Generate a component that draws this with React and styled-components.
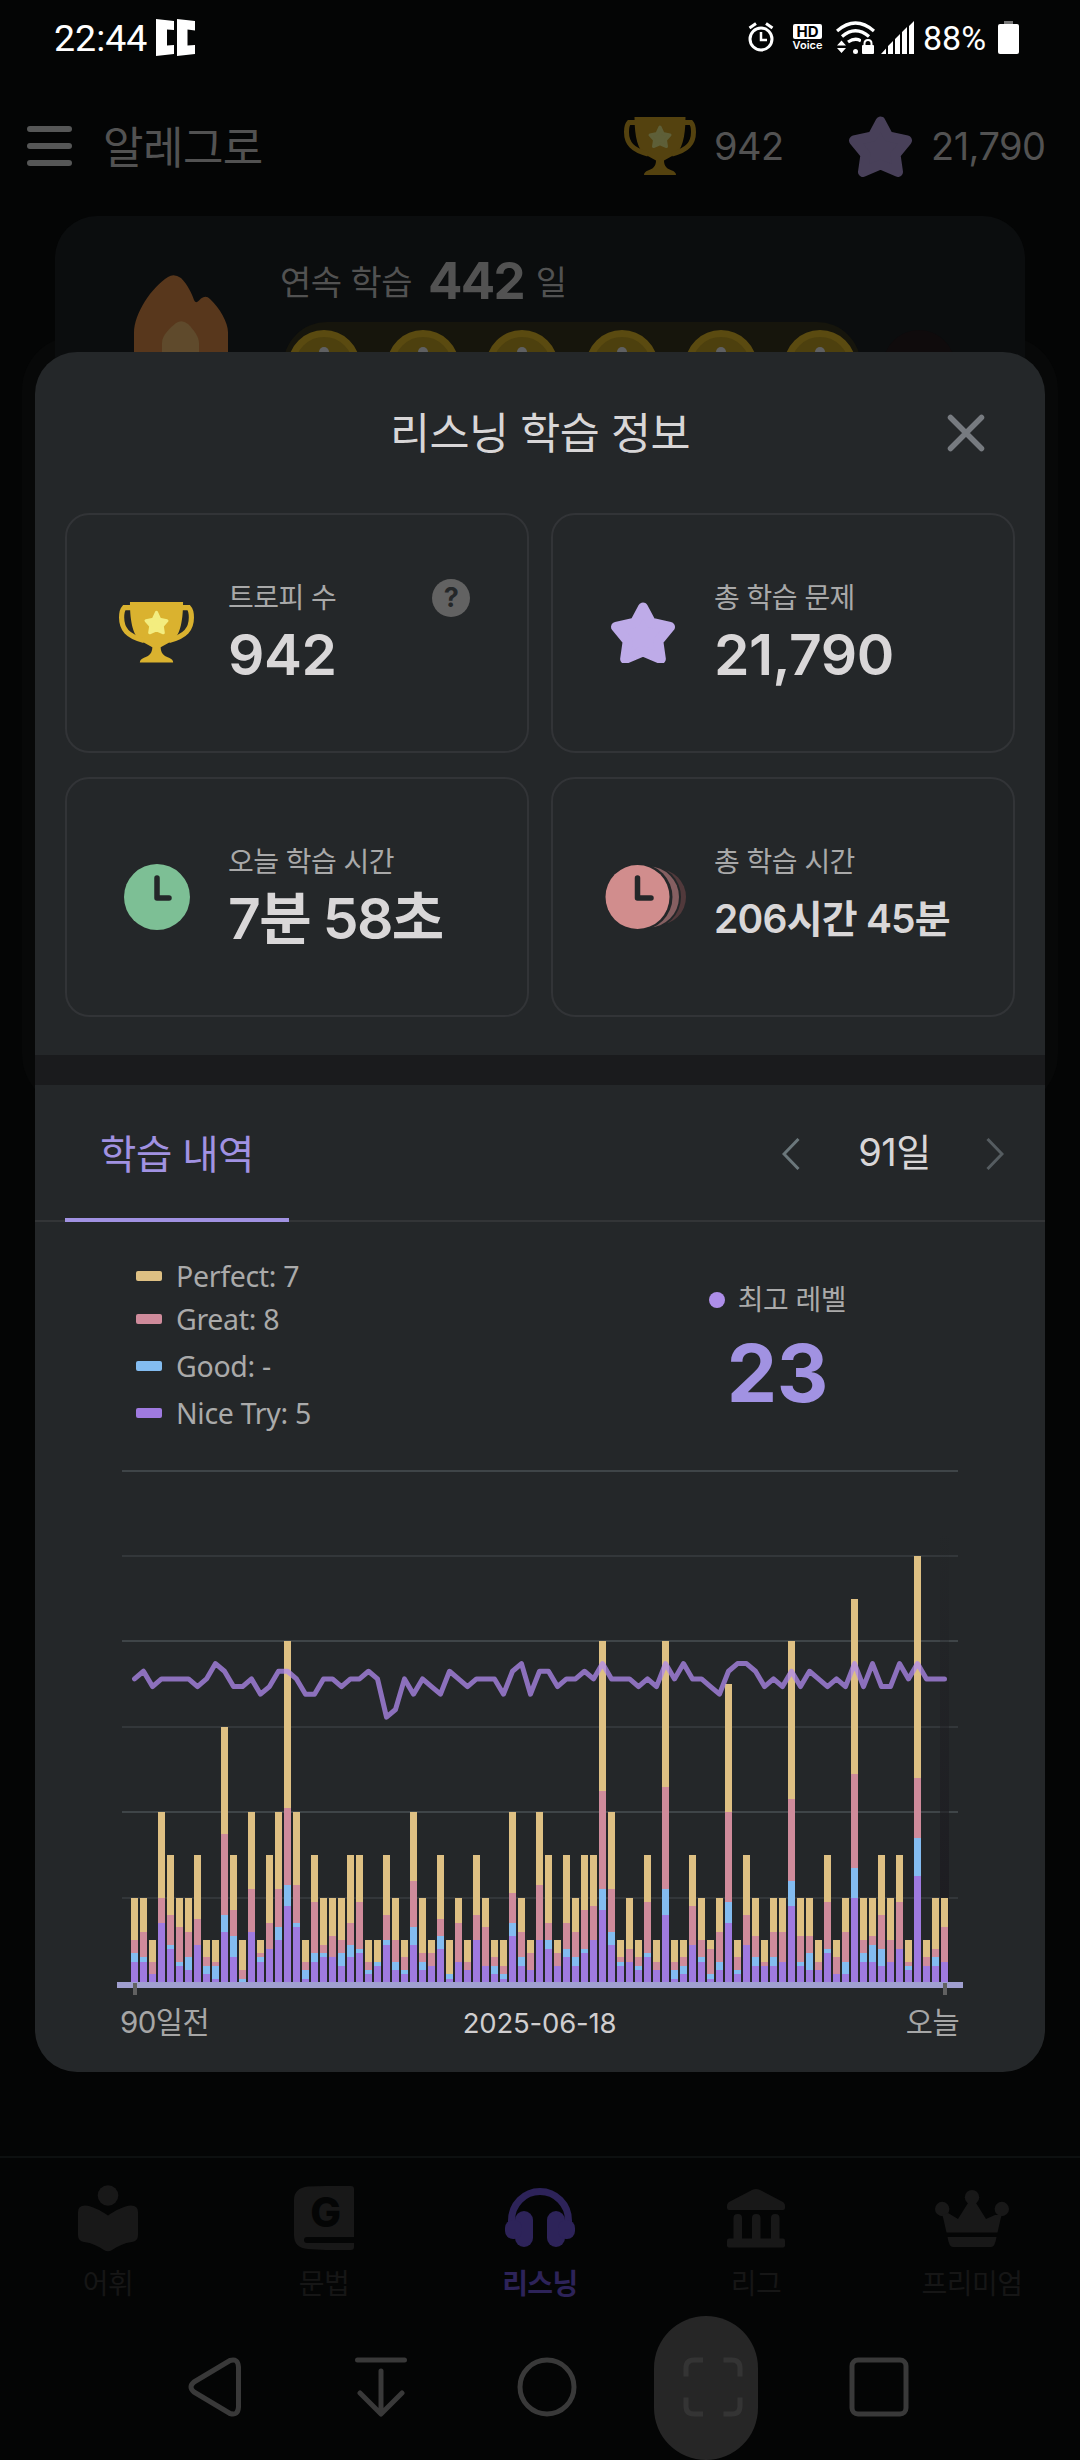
import React from 'react';
import styled, { createGlobalStyle } from 'styled-components';

// [nice try, good, great, total] - running sums for every day
const days = [
  [5, 7, 10, 20], [5, 6, 12, 20], [2, 2, 5, 10], [14, 14, 20, 40], [8, 9, 16, 30], [4, 5, 13, 20], [3, 6, 12, 20],
  [9, 9, 15, 30], [2, 4, 6, 10], [1, 4, 5, 10], [12, 16, 35, 60], [6, 11, 17, 30], [0, 1, 3, 10], [12, 12, 22, 40],
  [5, 6, 7, 10], [8, 8, 14, 30], [10, 13, 22, 40], [18, 23, 41, 80], [13, 14, 23, 40], [1, 3, 5, 10], [5, 7, 19, 30],
  [6, 7, 9, 20], [6, 6, 11, 20], [4, 7, 10, 20], [6, 9, 14, 30], [7, 8, 19, 30], [2, 3, 5, 10], [4, 5, 5, 10],
  [9, 10, 16, 30], [3, 5, 10, 20], [2, 3, 6, 10], [9, 13, 24, 40], [3, 5, 7, 20], [4, 4, 7, 10], [8, 11, 15, 30],
  [1, 2, 2, 10], [5, 5, 14, 20], [3, 3, 5, 10], [10, 10, 16, 30], [4, 4, 13, 20], [2, 4, 6, 10], [1, 2, 4, 10],
  [11, 14, 21, 40], [4, 6, 12, 20], [3, 3, 7, 10], [10, 10, 23, 40], [8, 10, 14, 30], [4, 4, 7, 10], [6, 8, 14, 30],
  [4, 6, 12, 20], [7, 8, 17, 30], [10, 10, 18, 30], [17, 22, 45, 80], [9, 12, 22, 40], [4, 5, 6, 10], [5, 5, 8, 20],
  [3, 4, 6, 10], [6, 7, 19, 30], [3, 3, 5, 10], [16, 22, 46, 80], [1, 3, 5, 10], [2, 4, 6, 10], [9, 9, 18, 30],
  [5, 6, 10, 20], [1, 2, 8, 10], [3, 5, 12, 20], [14, 19, 40, 70], [2, 3, 6, 10], [9, 9, 16, 30], [4, 6, 11, 20],
  [4, 4, 5, 10], [4, 6, 12, 20], [5, 5, 12, 20], [18, 24, 43, 80], [4, 5, 11, 20], [3, 7, 11, 20], [3, 3, 5, 10],
  [7, 8, 19, 30], [2, 2, 6, 10], [2, 5, 12, 20], [20, 27, 49, 90], [5, 7, 10, 20], [5, 9, 11, 20], [4, 8, 16, 30],
  [5, 5, 10, 20], [8, 8, 19, 30], [3, 4, 5, 10], [25, 34, 48, 100], [4, 4, 6, 10], [4, 6, 8, 20], [5, 5, 13, 20]
];

const levels = [
  23, 24, 22, 23, 23, 23, 23, 22, 23, 25, 24, 22, 22, 23, 21, 22, 24, 24, 23, 21, 21, 23, 23, 22, 23, 23, 24, 23, 18, 19,
  23, 21, 23, 22, 21, 24, 23, 22, 23, 23, 23, 21, 24, 25, 21, 24, 24, 22, 23, 23, 24, 23, 25, 23, 23, 23, 22, 23, 22, 25,
  23, 25, 23, 23, 22, 21, 24, 25, 25, 24, 22, 23, 22, 24, 22, 24, 23, 22, 23, 22, 25, 22, 25, 22, 22, 25, 23, 25, 23, 23,
  23
];

const barColors = ['#9f7ae0', '#83bcf0', '#cf8b9b', '#dec083'];

const legend = [
  { label: 'Perfect: 7', color: '#dec083' },
  { label: 'Great: 8', color: '#cf8b9b' },
  { label: 'Good: -', color: '#83bcf0' },
  { label: 'Nice Try: 5', color: '#9f7ae0' }
];

const BASE = 514;
const UNIT = 4.27;

function StudyChart() {
  const toY = (value) => Math.round(BASE - value * UNIT);
  const points = levels.map((level, i) => `${17.5 + i * 9},${209.9 + (23 - level) * 7.65}`).join(' ');
  return (
    <svg width="846" height="526" viewBox="0 0 846 526">
      <defs>
        <linearGradient id="today" x1="0" y1="0" x2="0" y2="1">
          <stop offset="0" stopColor="#1c1b20" stopOpacity="0" />
          <stop offset="1" stopColor="#1c1b20" />
        </linearGradient>
      </defs>
      {[20, 40, 60, 80, 100, 120].map((v) => (
        <rect key={v} x="5" y={toY(v) - 1} width="836" height="2" fill={v % 40 === 0 ? '#3f4548' : '#33373a'} />
      ))}
      <rect x="823" y="60" width="9" height="454" fill="url(#today)" />
      {days.map((day, i) =>
        day.map((value, part) => {
          const from = part ? day[part - 1] : 0;
          if (value === from) return null;
          return (
            <rect
              key={`${i}-${part}`}
              x={14 + i * 9}
              y={toY(value)}
              width="7"
              height={toY(from) - toY(value)}
              fill={barColors[part]}
            />
          );
        })
      )}
      <polyline
        points={points}
        fill="none"
        stroke="#af8aed"
        strokeOpacity="0.75"
        strokeWidth="5"
        strokeLinejoin="round"
        strokeLinecap="round"
      />
      <rect x="0" y="513" width="846" height="6" fill="#a09fd0" />
      <rect x="16" y="514" width="4" height="12" fill="#616161" />
      <rect x="826" y="514" width="4" height="12" fill="#616161" />
    </svg>
  );
}

function StarIcon({ size = 63, color }) {
  return (
    <svg width={size} height={(size * 61) / 63} viewBox="0 0 63 61">
      <path
        d="M31.5 5.5L39.5 20.5L58 24.5L46.5 38.5L49 56L31.5 48.5L14 56L16.5 38.5L5 24.5L23.5 20.5Z"
        fill={color}
        stroke={color}
        strokeWidth="10"
        strokeLinejoin="round"
      />
    </svg>
  );
}

function TrophyIcon({ width = 72, color, star }) {
  return (
    <svg width={width} height={(width * 58) / 72} viewBox="0 0 72 58">
      <path
        d="M10.5 0H61.5C61.5 20 58 34 50 38L40 43.5C40 49 43 52 48 53.5Q52 55 52 58H20Q20 55 24 53.5C29 52 32 49 32 43.5L22 38C14 34 10.5 20 10.5 0Z"
        fill={color}
      />
      <path
        d="M12 5.5H5Q2.5 8 2.5 15C2.5 26 8 33 24 37M60 5.5H67Q69.5 8 69.5 15C69.5 26 64 33 48 37"
        fill="none"
        stroke={color}
        strokeWidth="5"
      />
      <path
        d="M36 10L39 16.5L46 18L41.5 23L42.5 29.5L36 26.8L29.5 29.5L30.5 23L26 18L33 16.5Z"
        fill={star}
        stroke={star}
        strokeWidth="3"
        strokeLinejoin="round"
      />
    </svg>
  );
}

function ClockIcon({ color }) {
  return (
    <svg width="66" height="66" viewBox="0 0 66 66">
      <circle cx="33" cy="33" r="33" fill={color} />
      <path d="M33 14V34H45" fill="none" stroke="#242729" strokeWidth="5.5" strokeLinecap="round" strokeLinejoin="round" />
    </svg>
  );
}

function StackedClockIcon() {
  return (
    <svg width="82" height="66" viewBox="0 0 82 66">
      <circle cx="53" cy="33" r="28" fill="#51393b" />
      <circle cx="44" cy="33" r="32" fill="#242729" />
      <circle cx="43.5" cy="33" r="30.5" fill="#855f61" />
      <circle cx="34" cy="33" r="33.5" fill="#242729" />
      <circle cx="32.5" cy="33" r="32" fill="#d18d8d" />
      <path d="M32.5 14V34H46" fill="none" stroke="#242729" strokeWidth="5.5" strokeLinecap="round" strokeLinejoin="round" />
    </svg>
  );
}

function StatusIcons() {
  return (
    <>
      <svg width="26" height="30" viewBox="0 0 26 30" fill="none" stroke="#fff">
        <circle cx="13" cy="17" r="11" strokeWidth="3" />
        <path d="M13 10V18H19" strokeWidth="2.5" />
        <path d="M1.5 6L8 1.5M24.5 6L18 1.5" strokeWidth="3" />
      </svg>
      <HdVoice>
        <b>HD</b>
        <span>Voice</span>
      </HdVoice>
      <svg width="39" height="33" viewBox="0 0 39 33">
        <g fill="none" stroke="#fff" strokeWidth="3.3">
          <path d="M1 10Q19.5 -6 38 10" />
          <path d="M6 15.5Q19.5 4 33 15.5" />
          <path d="M12 21Q19.5 16 25 20" />
        </g>
        <path d="M1 24.5L5.5 19.5L10 24.5ZM1 27L5.5 32L10 27Z" fill="#fff" />
        <circle cx="19.5" cy="30.5" r="2.5" fill="#fff" />
        <rect x="25" y="17" width="14" height="16" fill="#040404" />
        <rect x="26" y="24" width="12" height="9" rx="1" fill="#fff" />
        <path d="M28.5 25V22.5Q28.5 19 32 19T35.5 22.5V25" fill="none" stroke="#fff" strokeWidth="2" />
      </svg>
      <svg width="33" height="33" viewBox="0 0 33 33" fill="#fff">
        <path d="M0 33L5 27.5V33ZM7 33V25L12 20V33ZM14 33V18L19 13V33ZM21 33V11L26 6V33ZM28 33V5L33 0V33Z" />
      </svg>
      <Percent>88%</Percent>
      <svg width="21" height="33" viewBox="0 0 21 33">
        <rect x="6" y="0" width="9" height="4" fill="#777" />
        <rect x="0" y="3" width="21" height="30" rx="2" fill="#fff" />
      </svg>
    </>
  );
}

function WordIcon() {
  return (
    <svg width="60" height="67" viewBox="0 0 60 67" fill="#181818">
      <circle cx="30" cy="10.5" r="10.3" />
      <path d="M30 30.5C22 25 14 21 7 20.5Q0 20.5 0 27V50Q0 56 6 57C14 58 20 61 26 65Q30 67.5 34 65C40 61 46 58 54 57Q60 56 60 50V27Q60 20.5 53 20.5C46 21 38 25 30 30.5Z" />
    </svg>
  );
}

function GrammarIcon() {
  return (
    <svg width="60" height="64" viewBox="0 0 60 64">
      <path
        d="M14 0.5L32 0H57Q60 0 60 3V51H13A3 3 0 0 0 13 57H60V61Q60 64 57 64H32L14 63Q0 62 0 49V14Q0 2 14 0.5Z"
        fill="#181818"
      />
      <BookLetter x="31.5" y="41" textAnchor="middle">
        G
      </BookLetter>
    </svg>
  );
}

function ListeningIcon() {
  return (
    <svg width="70" height="60" viewBox="0 0 70 60" fill="#2d2359">
      <path d="M6.5 38V32.5A28.5 29 0 0 1 63.5 32.5V38" fill="none" stroke="#2d2359" strokeWidth="7" />
      <rect x="10" y="23" width="18" height="36" rx="9" />
      <rect x="42" y="23" width="18" height="36" rx="9" />
      <rect x="0" y="32" width="17" height="19" rx="8" />
      <rect x="53" y="32" width="17" height="19" rx="8" />
    </svg>
  );
}

function LeagueIcon() {
  return (
    <svg width="58" height="59" viewBox="0 0 58 59" fill="#181818">
      <path d="M0 17Q0 14 3 12.5L25 1Q29 -0.8 33 1L55 12.5Q58 14 58 17V19Q58 21 56 21H2Q0 21 0 19Z" />
      <rect x="6.5" y="25" width="8.5" height="30" rx="4" />
      <rect x="25" y="25" width="8.5" height="30" rx="4" />
      <rect x="44" y="25" width="8.5" height="30" rx="4" />
      <rect x="0" y="49.5" width="58" height="9" rx="2" />
    </svg>
  );
}

function PremiumIcon() {
  return (
    <svg width="74" height="57" viewBox="0 0 74 57" fill="#181818">
      <circle cx="7.2" cy="19" r="7.2" />
      <circle cx="37" cy="7.2" r="7.2" />
      <circle cx="66.8" cy="19" r="7.2" />
      <path d="M7.5 25L11.5 42.5H62.5L66.5 25L60 25L51 29L41 13H33L23 29L13 23Z" />
      <path d="M12.5 47H61.5Q60 57 56 57H18Q14 57 12.5 47Z" />
    </svg>
  );
}

const tabs = [
  { label: '어휘', Icon: WordIcon },
  { label: '문법', Icon: GrammarIcon },
  { label: '리스닝', Icon: ListeningIcon, active: true },
  { label: '리그', Icon: LeagueIcon },
  { label: '프리미엄', Icon: PremiumIcon }
];

function App() {
  return (
    <Screen>
      <GlobalStyle />
      <StatusBar>
        <Clock>22:44</Clock>
        <svg width="39" height="37" viewBox="0 0 39 37" fill="#fff">
          <path d="M0 0L18 2V11L11 10.5V26.5L18 26V35L0 37ZM21 0L39 2V11.5L31.5 10.5V26.5L39 26V35L21 37Z" />
        </svg>
        <StatusRight>
          <StatusIcons />
        </StatusRight>
      </StatusBar>
      <Header>
        <MenuButton>
          <i />
          <i />
          <i />
        </MenuButton>
        <PageName>알레그로</PageName>
        <TrophyIcon color="#54420f" star="#5e5f38" />
        <HeaderCount $left={18} $width={135}>
          942
        </HeaderCount>
        <StarIcon color="#484059" />
        <HeaderCount $left={19}>21,790</HeaderCount>
      </Header>
      <StreakCard>
        <svg width="94" height="90" viewBox="0 0 94 90">
          <path
            d="M0 90V58C0 38 18 12 34 2Q40 -2 47 3C54 10 58 19 60 25Q61.5 29 65 25.5L67 23.5Q72 20 76 24C86 33 94 48 94 57V90Z"
            fill="#58371c"
          />
          <path d="M28 90V68C28 60 36 53 42 48Q48 44 54 49C60 55 65 62 65 68V90Z" fill="#5f4a2c" />
        </svg>
        <StreakBody>
          <StreakText>
            <span>연속 학습</span>
            <strong>442</strong>
            <span>일</span>
          </StreakText>
          <CoinRow>
            <CoinTrack>
              {[0, 1, 2, 3, 4, 5].map((n) => (
                <Coin key={n} />
              ))}
            </CoinTrack>
            <EmptyCoin />
          </CoinRow>
        </StreakBody>
      </StreakCard>
      <BackPanel />

      <Modal>
        <ModalHeader>
          <ModalTitle>리스닝 학습 정보</ModalTitle>
          <CloseButton>
            <svg width="38" height="38" viewBox="0 0 38 38" stroke="#777b80" strokeWidth="5.5" strokeLinecap="round">
              <path d="M3.5 3.5L34.5 34.5M34.5 3.5L3.5 34.5" />
            </svg>
          </CloseButton>
        </ModalHeader>
        <StatGrid>
          <StatCard>
            <StatIcon $shift={-1}>
              <TrophyIcon width={75} color="#dab22f" star="#f3ed7f" />
            </StatIcon>
            <StatBody>
              <StatLabel>트로피 수</StatLabel>
              <StatValue>942</StatValue>
            </StatBody>
            <HelpBadge>?</HelpBadge>
          </StatCard>
          <StatCard>
            <StatIcon>
              <StarIcon size={64} color="#beabe8" />
            </StatIcon>
            <StatBody>
              <StatLabel>총 학습 문제</StatLabel>
              <StatValue>21,790</StatValue>
            </StatBody>
          </StatCard>
          <StatCard>
            <StatIcon>
              <ClockIcon color="#7dbf95" />
            </StatIcon>
            <StatBody>
              <StatLabel>오늘 학습 시간</StatLabel>
              <StatValue $spacing="-0.029em">7분 58초</StatValue>
            </StatBody>
          </StatCard>
          <StatCard>
            <StatIcon $shift={3}>
              <StackedClockIcon />
            </StatIcon>
            <StatBody>
              <StatLabel>총 학습 시간</StatLabel>
              <StatValue $spacing="-0.02em" $small>
                206시간 45분
              </StatValue>
            </StatBody>
          </StatCard>
        </StatGrid>
        <Divider />
        <HistoryBar>
          <HistoryTab>학습 내역</HistoryTab>
          <PeriodPicker>
            <svg width="18" height="32" viewBox="0 0 18 32" fill="none" stroke="#6b777b" strokeWidth="3">
              <path d="M16.5 1L2 16L16.5 31" />
            </svg>
            <span>91일</span>
            <svg width="18" height="32" viewBox="0 0 18 32" fill="none" stroke="#555c60" strokeWidth="3">
              <path d="M1.5 1L16 16L1.5 31" />
            </svg>
          </PeriodPicker>
        </HistoryBar>
        <Summary>
          <Legend>
            {legend.map((item) => (
              <LegendItem key={item.label} $color={item.color}>
                {item.label}
              </LegendItem>
            ))}
          </Legend>
          <BestLevel>
            <BestLevelLabel>최고 레벨</BestLevelLabel>
            <BestLevelValue>23</BestLevelValue>
          </BestLevel>
        </Summary>
        <ChartWrap>
          <StudyChart />
          <AxisLabels>
            <span>90일전</span>
            <AxisDate>2025-06-18</AxisDate>
            <span>오늘</span>
          </AxisLabels>
        </ChartWrap>
      </Modal>

      <TabBar>
        {tabs.map(({ label, Icon, active }) => (
          <Tab key={label} $active={active}>
            <TabIcon>
              <Icon />
            </TabIcon>
            {label}
          </Tab>
        ))}
      </TabBar>
      <SystemNav>
        <NavKey>
          <svg width="54" height="60" viewBox="0 0 54 60">
            <path d="M42 3.5L6 25Q0 30 6 35L42 56.5Q50 59 50.5 50V10Q50 1 42 3.5Z" />
          </svg>
        </NavKey>
        <NavKey>
          <svg width="54" height="60" viewBox="0 0 54 60">
            <path d="M3.5 3H50.5M27 14V56M6 36L27 57L48 36" />
          </svg>
        </NavKey>
        <NavKey>
          <svg width="60" height="60" viewBox="0 0 60 60">
            <circle cx="30" cy="30" r="27" />
          </svg>
        </NavKey>
        <NavKey $pressed>
          <svg width="60" height="60" viewBox="0 0 60 60">
            <path d="M3 19.5V11Q3 3 11 3H20M40.5 3H49Q57 3 57 11V19.5M57 40.5V49Q57 57 49 57H40.5M20 57H11Q3 57 3 49V40.5" />
          </svg>
        </NavKey>
        <NavKey>
          <svg width="60" height="60" viewBox="0 0 60 60">
            <rect x="3" y="3" width="54" height="54" rx="6" />
          </svg>
        </NavKey>
      </SystemNav>
    </Screen>
  );
}

export default App;

// style
const GlobalStyle = createGlobalStyle`
  * {
    box-sizing: border-box;
  }
  body {
    margin: 0;
    background-color: #040505;
    font-family: Inter, 'Noto Sans CJK KR', sans-serif;
  }
  svg {
    display: block;
    flex-shrink: 0;
  }
`;

const Screen = styled.div`
  position: relative;
  display: flex;
  flex-direction: column;
  width: 1080px;
  height: 2460px;
  overflow: hidden;
  background-color: #040505;
  letter-spacing: -0.033em;
`;

const StatusBar = styled.div`
  display: flex;
  align-items: center;
  height: 74px;
  padding: 0 61px 0 54px;
  color: #fff;
  font-family: Roboto, sans-serif;
  letter-spacing: 0;
`;

const Clock = styled.span`
  width: 102px;
  padding-top: 2px;
  font-size: 37.5px;
  line-height: 40px;
`;

const StatusRight = styled.div`
  display: flex;
  align-items: center;
  margin-left: auto;

  svg:nth-of-type(2) {
    margin: 0 6px 0 14px;
  }
`;

const HdVoice = styled.div`
  display: flex;
  flex-direction: column;
  align-items: center;
  width: 29px;
  margin: 2px 0 0 19px;
  font-family: Inter, sans-serif;

  b {
    width: 29px;
    height: 15px;
    border-radius: 2px;
    background-color: #fff;
    color: #000;
    font-size: 15px;
    line-height: 15px;
    text-align: center;
  }
  span {
    font-size: 11px;
    font-weight: 600;
    line-height: 13px;
  }
`;

const Percent = styled.span`
  width: 75px;
  margin: 1px 0 0 9px;
  font-size: 34px;
  line-height: 36px;
`;

const Header = styled.div`
  display: flex;
  align-items: center;
  height: 142px;
  padding: 2px 0 0 27px;
  color: #525252;
`;

const MenuButton = styled.div`
  display: flex;
  flex-direction: column;
  gap: 11px;
  width: 45px;

  i {
    height: 6px;
    border-radius: 3px;
    background-color: #565757;
  }
`;

const PageName = styled.div`
  width: 521px;
  margin-left: 31px;
  padding-top: 3px;
  font-size: 44px;
  line-height: 50px;
`;

const HeaderCount = styled.div`
  width: ${({ $width }) => ($width ? `${$width}px` : 'auto')};
  margin-left: ${({ $left }) => $left}px;
  font-size: 38px;
  line-height: 46px;
`;

const StreakCard = styled.div`
  position: relative;
  z-index: 1;
  display: flex;
  height: 200px;
  margin: 0 55px;
  padding: 0 0 0 79px;
  border-radius: 42px;
  background-color: #0b0d0e;
  overflow: hidden;

  > svg {
    margin-top: 59px;
  }
`;

const StreakBody = styled.div`
  margin-left: 55px;
`;

const StreakText = styled.div`
  display: flex;
  height: 106px;
  padding-top: 35px;
  margin-left: -3px;
  color: #525252;
  font-size: 34px;
  line-height: 64px;

  strong {
    margin: 0 12px 0 16px;
    font-size: 51px;
    font-weight: 700;
    line-height: 60px;
    letter-spacing: -0.035em;
  }
`;

const CoinRow = styled.div`
  display: flex;
  gap: 22px;
`;

const CoinTrack = styled.div`
  display: flex;
  gap: 27.2px;
  width: 578px;
  height: 88px;
  padding: 8px 0 0 5px;
  border-radius: 44px;
  background-color: #16150c;
`;

const Coin = styled.div`
  width: 72px;
  height: 72px;
  border: 7px solid #5a4a10;
  border-radius: 50%;
  background-color: #4d400e;

  &::before {
    content: '';
    display: block;
    width: 10px;
    height: 30px;
    margin: 10px auto 0;
    border-radius: 5px;
    background-color: #5f6062;
  }
`;

const EmptyCoin = styled.div`
  width: 72px;
  height: 72px;
  margin-top: 8px;
  border-radius: 50%;
  background-color: #0f0b0c;
`;

const BackPanel = styled.div`
  flex-shrink: 0;
  height: 772px;
  margin: -80px 22px 0;
  border-radius: 54px;
  background-color: #070808;
`;

const Modal = styled.div`
  position: absolute;
  z-index: 2;
  top: 352px;
  left: 35px;
  display: flex;
  flex-direction: column;
  width: 1010px;
  height: 1720px;
  border-radius: 42px;
  background-color: #242729;
`;

const ModalHeader = styled.div`
  display: grid;
  grid-template-columns: 1fr auto 1fr;
  align-items: center;
  height: 161px;
`;

const ModalTitle = styled.div`
  grid-column: 2;
  color: #d8d6d7;
  font-size: 43.5px;
  line-height: 50px;
`;

const CloseButton = styled.div`
  justify-self: end;
  margin-right: 60px;
`;

const StatGrid = styled.div`
  display: grid;
  grid-template-columns: 464px 464px;
  grid-auto-rows: 240px;
  gap: 24px 22px;
  padding: 0 30px 38px;
`;

const StatCard = styled.div`
  display: flex;
  border: 2px solid #323437;
  border-radius: 24px;
`;

const StatIcon = styled.div`
  display: flex;
  align-items: center;
  justify-content: center;
  width: 100px;
  margin-left: ${({ $shift = 0 }) => 40 + $shift}px;
  margin-right: ${({ $shift = 0 }) => -$shift}px;
  padding-bottom: 1px;
`;

const StatBody = styled.div`
  flex: 1;
  padding: 65px 0 0 21px;
  white-space: nowrap;
`;

const StatLabel = styled.div`
  color: #a9a9a9;
  font-size: 28px;
  line-height: 36px;
`;

const StatValue = styled.div`
  margin-top: 3px;
  color: #d9d7d8;
  font-size: ${({ $small }) => ($small ? 39 : 57)}px;
  font-weight: 600;
  line-height: 72px;
  letter-spacing: ${({ $spacing = '-0.009em' }) => $spacing};
`;

const HelpBadge = styled.div`
  width: 38px;
  height: 38px;
  margin: 64px 57px 0 0;
  border-radius: 50%;
  background-color: #626262;
  color: #242729;
  font-size: 27px;
  font-weight: 700;
  line-height: 38px;
  text-align: center;
`;

const Divider = styled.div`
  height: 30px;
  background-color: #1a1b1d;
`;

const HistoryBar = styled.div`
  display: flex;
  justify-content: space-between;
  height: 137px;
  padding: 0 41px 0 30px;
  box-shadow: inset 0 -2px 0 #333537;
`;

const HistoryTab = styled.div`
  width: 224px;
  padding-top: 2px;
  border-bottom: 4px solid #a192e2;
  color: #a192e2;
  font-size: 39.5px;
  line-height: 137px;
  text-align: center;
`;

const PeriodPicker = styled.div`
  display: flex;
  align-items: center;
  justify-content: space-between;
  width: 222px;
  padding-top: 1px;
  color: #d8d6d7;
  font-size: 38px;

  span {
    padding: 0 0 4px 3px;
    line-height: 44px;
  }
`;

const Summary = styled.div`
  display: flex;
  justify-content: space-between;
  height: 247px;
  padding: 0 199px 0 101px;
`;

const Legend = styled.div`
  display: flex;
  flex-direction: column;
  gap: 7px;
  padding-top: 34px;
`;

const LegendItem = styled.div`
  display: flex;
  align-items: center;
  color: #aaa;
  font-family: 'Noto Sans', sans-serif;
  font-size: 28.5px;
  line-height: 40px;
  letter-spacing: -0.3px;

  &:nth-child(2) {
    margin-top: -4px;
  }
  &::before {
    content: '';
    width: 26px;
    height: 10px;
    margin-right: 14px;
    border-radius: 2px;
    background-color: ${({ $color }) => $color};
  }
`;

const BestLevel = styled.div`
  display: flex;
  flex-direction: column;
  align-items: center;
  padding-top: 60px;
`;

const BestLevelLabel = styled.div`
  display: flex;
  align-items: center;
  color: #aaa;
  font-size: 28px;
  line-height: 36px;

  &::before {
    content: '';
    width: 16px;
    height: 16px;
    margin-right: 13px;
    border-radius: 50%;
    background-color: #ae8ee9;
  }
`;

const BestLevelValue = styled.div`
  margin-top: 15px;
  color: #a192e2;
  font-size: 80px;
  font-weight: 700;
  line-height: 80px;
`;

const ChartWrap = styled.div`
  width: 846px;
  margin: 0 auto;
`;

const AxisLabels = styled.div`
  display: grid;
  grid-template-columns: 1fr auto 1fr;
  padding: 6px 4px 0 3px;
  color: #a6a6a6;
  font-size: 29.5px;
  line-height: 42px;

  span:last-child {
    text-align: right;
  }
`;

const AxisDate = styled.div`
  color: #d0cecf;
  font-size: 27.5px;
  line-height: 45px;
  letter-spacing: -0.2px;
`;

const TabBar = styled.div`
  display: flex;
  height: 160px;
  margin-top: auto;
  border-top: 2px solid #0d1010;
`;

const Tab = styled.div`
  display: flex;
  flex-direction: column;
  align-items: center;
  width: 216px;
  padding-top: 26px;
  color: ${({ $active }) => ($active ? '#2d2359' : '#161616')};
  font-size: 28px;
  font-weight: ${({ $active }) => ($active ? 700 : 400)};
  line-height: 28px;
`;

const TabIcon = styled.div`
  display: flex;
  align-items: center;
  height: 68px;
  margin-bottom: 18px;
`;

const BookLetter = styled.text`
  fill: #040505;
  font-family: Inter, sans-serif;
  font-size: 41px;
  font-weight: 800;
`;

const SystemNav = styled.div`
  display: flex;
  justify-content: center;
  gap: 62px;
  height: 144px;
  padding-left: 14px;
`;

const NavKey = styled.div`
  display: flex;
  align-items: center;
  justify-content: center;
  width: 104px;
  border-radius: 52px;
  background-color: ${({ $pressed }) => ($pressed ? '#262626' : 'transparent')};
  margin-left: ${({ $pressed }) => ($pressed ? '-7px' : '0')};
  margin-right: ${({ $pressed }) => ($pressed ? '7px' : '0')};

  svg {
    margin-left: ${({ $pressed }) => ($pressed ? '14px' : '0')};
    margin-top: -2px;
    fill: none;
    stroke: ${({ $pressed }) => ($pressed ? '#343434' : '#393939')};
    stroke-width: 5;
    stroke-linecap: ${({ $pressed }) => ($pressed ? 'butt' : 'round')};
    stroke-linejoin: round;
  }
`;
